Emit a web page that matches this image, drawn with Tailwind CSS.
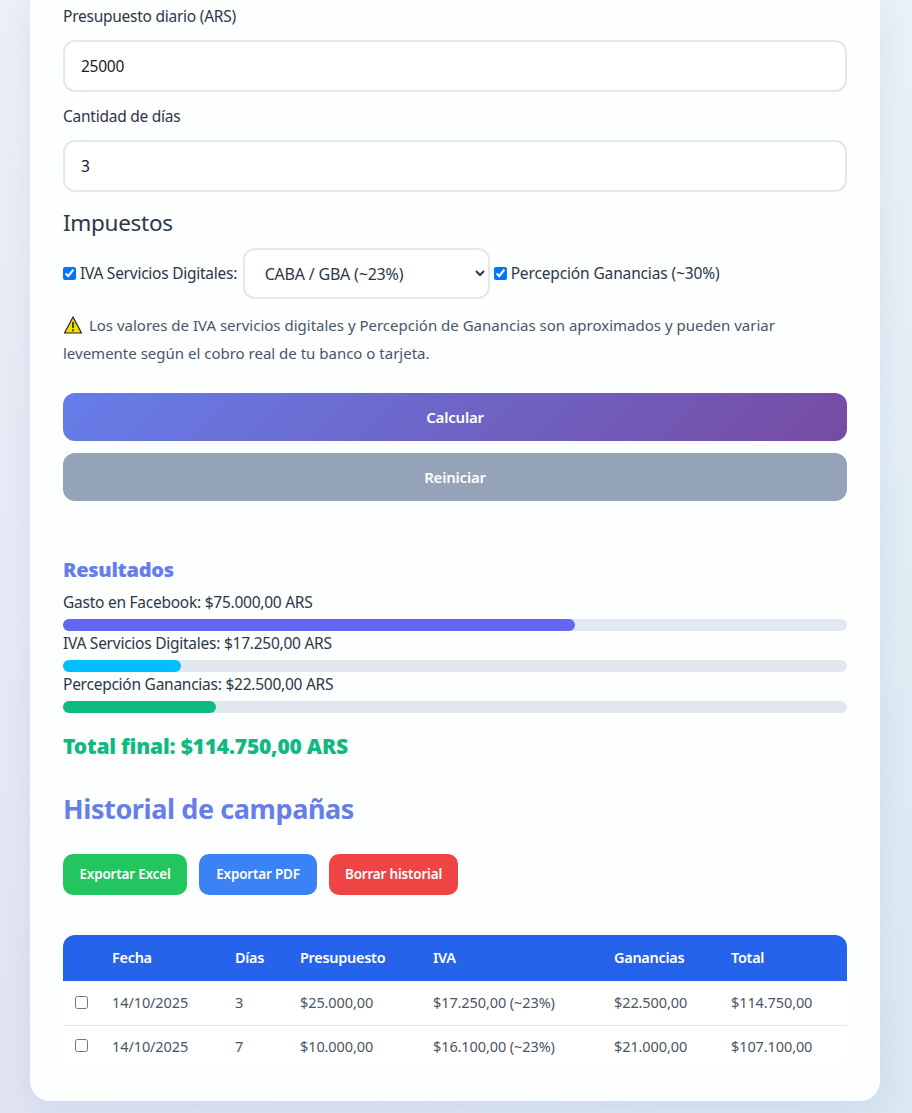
<!DOCTYPE html>
<html lang="es">

<head>
  <meta charset="UTF-8">
  <title>Calculadora de campañas</title>
  <script src="https://cdn.jsdelivr.net/npm/@tailwindcss/browser@4"></script>
</head>

<body class="h-[1113px] overflow-hidden bg-[linear-gradient(180deg,rgba(255,255,255,0.4),rgba(255,255,255,0)),linear-gradient(90deg,#e0e4f2,#d9e8f1)] font-['Noto_Sans',sans-serif] text-[15.5px] tracking-[-0.25px] text-[#2d3748]">
  <main class="ml-[30px] h-[1101px] w-[850px] rounded-b-[20px] bg-[#fdfefe] px-[33px] shadow-[0_8px_32px_rgba(31,38,135,0.07)]">

    <!-- Formulario -->
    <label class="block pt-[4px] leading-[24px]">Presupuesto diario (ARS)</label>
    <input type="text" value="25000" class="mt-[12px] block h-[52px] w-full rounded-[12px] border-2 border-[#e2e8f0] bg-white px-[16px] text-[#1a202c]">
    <label class="mt-[12px] block leading-[24px]">Cantidad de días</label>
    <input type="text" value="3" class="mt-[12px] block h-[52px] w-full rounded-[12px] border-2 border-[#e2e8f0] bg-white px-[16px] text-[#1a202c]">

    <h3 class="mt-[13px] text-[22.5px] leading-[36px] tracking-[-0.3px]">Impuestos</h3>
    <div class="mt-[7px] flex h-[51px] items-center">
      <input type="checkbox" checked class="h-[13px] w-[13px]">
      <span class="ml-[4px]">IVA Servicios Digitales:</span>
      <select class="ml-[5.5px] h-[51px] w-[247px] rounded-[12px] border-2 border-[#e2e8f0] bg-white px-[16px] text-[16px] tracking-[-0.2px]">
        <option>CABA / GBA (~23%)</option>
      </select>
      <input type="checkbox" checked class="ml-[4px] h-[13px] w-[13px]">
      <span class="ml-[4px] tracking-[-0.14px]">Percepción Ganancias (~30%)</span>
    </div>

    <p class="mt-[12px] text-[15px] leading-[28px] tracking-[0px] text-[#4a5568]">
      <svg class="mr-[2px] inline-block align-[-4px]" width="20" height="20" viewBox="0 0 20 20"><path d="M10 2 18.5 18H1.5Z" fill="#f7dc00" stroke="#222" stroke-width="1.2" stroke-linejoin="round"/><path d="M10 7V13M10 14.2V16.2" stroke="#222" stroke-width="1.6"/></svg>
      Los valores de IVA servicios digitales y Percepción de Ganancias son aproximados y pueden variar<br>levemente según el cobro real de tu banco o tarjeta.
    </p>

    <button class="mt-[26px] block h-[48px] w-full rounded-[12px] bg-[linear-gradient(135deg,#667eea,#764ba2)] text-[15px] font-semibold tracking-[-0.2px] text-white">Calcular</button>
    <button class="mt-[12px] block h-[48px] w-full rounded-[12px] bg-[#94a3b8] text-[15px] font-semibold tracking-[-0.2px] text-white">Reiniciar</button>

    <!-- Resultados -->
    <h3 class="mt-[53px] text-[20px] leading-[32px] font-black tracking-[-0.3px] text-[#667eea]">Resultados</h3>
    <div class="mt-[4px] leading-[24px]">Gasto en Facebook: $75.000,00 ARS</div>
    <div class="mt-[5px] h-[12px] rounded-full bg-[#e2e8f0]"><div class="h-full rounded-full bg-[#6366f1]" style="width:65.3%"></div></div>
    <div class="leading-[24px]">IVA Servicios Digitales: $17.250,00 ARS</div>
    <div class="mt-[5px] h-[12px] rounded-full bg-[#e2e8f0]"><div class="h-full rounded-full bg-[#00bfff]" style="width:15%"></div></div>
    <div class="leading-[24px]">Percepción Ganancias: $22.500,00 ARS</div>
    <div class="mt-[5px] h-[12px] rounded-full bg-[#e2e8f0]"><div class="h-full rounded-full bg-[#10b981]" style="width:19.5%"></div></div>
    <div class="mt-[17px] text-[21px] leading-[32px] font-black tracking-[-0.2px] text-[#10b981]">Total final: $114.750,00 ARS</div>

    <!-- Historial -->
    <h2 class="mt-[26px] text-[27px] leading-[42px] font-bold tracking-[-0.4px] text-[#667eea]">Historial de campañas</h2>
    <div class="mt-[24px] flex gap-[12px]">
      <button class="h-[41px] w-[124px] rounded-[10px] bg-[#22c55e] text-[13.5px] font-semibold tracking-[-0.2px] text-white">Exportar Excel</button>
      <button class="h-[41px] w-[118px] rounded-[10px] bg-[#3b82f6] text-[13.5px] font-semibold tracking-[-0.2px] text-white">Exportar PDF</button>
      <button class="h-[41px] w-[129px] rounded-[10px] bg-[#ef4444] text-[13.5px] font-semibold tracking-[-0.2px] text-white">Borrar historial</button>
    </div>

    <div class="mt-[40px] overflow-hidden rounded-[12px] bg-white">
      <table class="w-full table-fixed border-collapse text-left text-[14.5px] tracking-[-0.1px]">
        <colgroup>
          <col class="w-[37px]"><col class="w-[123px]"><col class="w-[65px]"><col class="w-[133px]"><col class="w-[181px]"><col class="w-[117px]"><col class="w-[128px]">
        </colgroup>
        <thead class="bg-[#2563eb] text-white">
          <tr class="h-[46px] border-b border-[#e5e7eb]/30">
            <th></th>
            <th class="px-[12px] font-semibold tracking-[-0.3px]">Fecha</th>
            <th class="px-[12px] font-semibold tracking-[-0.3px]">Días</th>
            <th class="px-[12px] font-semibold tracking-[-0.3px]">Presupuesto</th>
            <th class="px-[12px] font-semibold tracking-[-0.3px]">IVA</th>
            <th class="px-[12px] font-semibold tracking-[-0.3px]">Ganancias</th>
            <th class="px-[12px] font-semibold tracking-[-0.3px]">Total</th>
          </tr>
        </thead>
        <tbody class="text-[#4b5563]">
          <tr class="h-[44px] border-b border-[#e5e7eb]">
            <td class="pl-[12px]"><input type="checkbox" class="mb-[2px] block h-[13px] w-[13px]"></td>
            <td class="px-[12px]">14/10/2025</td>
            <td class="px-[12px]">3</td>
            <td class="px-[12px]">$25.000,00</td>
            <td class="px-[12px]">$17.250,00 (~23%)</td>
            <td class="px-[12px]">$22.500,00</td>
            <td class="px-[12px]">$114.750,00</td>
          </tr>
          <tr class="h-[43px]">
            <td class="pl-[12px]"><input type="checkbox" class="mb-[2px] block h-[13px] w-[13px]"></td>
            <td class="px-[12px]">14/10/2025</td>
            <td class="px-[12px]">7</td>
            <td class="px-[12px]">$10.000,00</td>
            <td class="px-[12px]">$16.100,00 (~23%)</td>
            <td class="px-[12px]">$21.000,00</td>
            <td class="px-[12px]">$107.100,00</td>
          </tr>
        </tbody>
      </table>
    </div>
  </main>
</body>

</html>
